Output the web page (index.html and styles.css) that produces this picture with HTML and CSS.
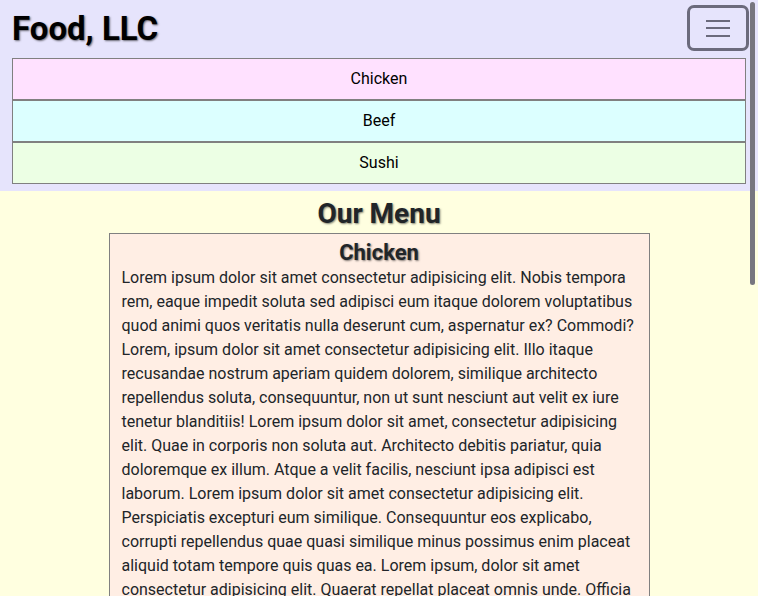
FILE: index.html
```html
<!DOCTYPE html>
<html lang="en">
<head>
<meta charset="utf-8">
<title>Food, LLC</title>
<link rel="stylesheet" href="styles.css">
</head>
<body>
<header class="site-header">
  <div class="top-row">
    <h1 class="brand">Food, LLC</h1>
    <button class="toggler" aria-label="Menu">
      <span class="bar"></span><span class="bar"></span><span class="bar"></span>
    </button>
  </div>
  <nav class="nav-list">
    <a class="nav-item chicken" href="#">Chicken</a>
    <a class="nav-item beef" href="#">Beef</a>
    <a class="nav-item sushi" href="#">Sushi</a>
  </nav>
</header>
<main class="content">
  <h2 class="menu-title">Our Menu</h2>
  <section class="card">
    <h3 class="card-title">Chicken</h3>
    <p class="card-text">Lorem ipsum dolor sit amet consectetur adipisicing elit. Nobis tempora rem, eaque impedit soluta sed adipisci eum itaque dolorem voluptatibus quod animi quos veritatis nulla deserunt cum, aspernatur ex? Commodi? Lorem, ipsum dolor sit amet consectetur adipisicing elit. Illo itaque recusandae nostrum aperiam quidem dolorem, similique architecto repellendus soluta, consequuntur, non ut sunt nesciunt aut velit ex iure tenetur blanditiis! Lorem ipsum dolor sit amet, consectetur adipisicing elit. Quae in corporis non soluta aut. Architecto debitis pariatur, quia doloremque ex illum. Atque a velit facilis, nesciunt ipsa adipisci est laborum. Lorem ipsum dolor sit amet consectetur adipisicing elit. Perspiciatis excepturi eum similique. Consequuntur eos explicabo, corrupti repellendus quae quasi similique minus possimus enim placeat aliquid totam tempore quis quas ea. Lorem ipsum, dolor sit amet consectetur adipisicing elit. Quaerat repellat placeat omnis unde. Officia laudantium dolorum, quibusdam ab impedit voluptatum.</p>
  </section>
</main>
<div class="scroll-thumb"></div>
</body>
</html>
```

FILE: styles.css
```css
html, body {
  margin: 0;
  padding: 0;
}
body {
  background: #ffffe0;
  font-family: Roboto, "Liberation Sans", sans-serif;
  font-size: 16px;
  line-height: 24px;
  color: #212529;
}
.site-header {
  background: #e6e4fc;
  padding: 5px 12px 7px 12px;
}
.top-row {
  display: flex;
  justify-content: space-between;
  align-items: center;
  margin-right: -3px;
  margin-bottom: 7px;
}
.brand {
  margin: 0;
  font-size: 33px;
  line-height: 43px;
  font-weight: 700;
  color: #000;
  text-shadow: 1px 1px 2px rgba(0,0,0,0.55);
}
.toggler {
  width: 62px;
  height: 46px;
  box-sizing: border-box;
  border: 3px solid #6b6a7c;
  border-radius: 7px;
  background: transparent;
  display: flex;
  flex-direction: column;
  justify-content: center;
  align-items: center;
  gap: 5.5px;
  padding: 0;
}
.bar {
  display: block;
  width: 24px;
  height: 2px;
  background: #6b6a7c;
}
.nav-list {
  display: flex;
  flex-direction: column;
}
.nav-item {
  display: block;
  border: 1px solid #808080;
  padding: 8px;
  text-align: center;
  color: #000;
  text-decoration: none;
}
.chicken { background: #ffe1ff; }
.beef { background: #dcffff; }
.sushi { background: #ecffe4; }
.content {
  display: flex;
  flex-direction: column;
  align-items: center;
}
.menu-title {
  margin: 6px 0 2px;
  font-size: 28px;
  line-height: 34px;
  font-weight: 700;
  text-shadow: 1px 1px 2px rgba(0,0,0,0.5);
}
.card {
  width: 541px;
  box-sizing: border-box;
  background: #ffeee4;
  border: 1px solid #808080;
  padding: 5px 12px 12px;
}
.card-title {
  margin: 0;
  text-align: center;
  font-size: 22px;
  line-height: 27px;
  font-weight: 700;
  text-shadow: 1px 1px 2px rgba(0,0,0,0.5);
}
.card-text {
  margin: 0;
}
.scroll-thumb {
  position: fixed;
  top: 2px;
  right: 3px;
  width: 5px;
  height: 283px;
  border-radius: 3px;
  background: #77767f;
}
```
